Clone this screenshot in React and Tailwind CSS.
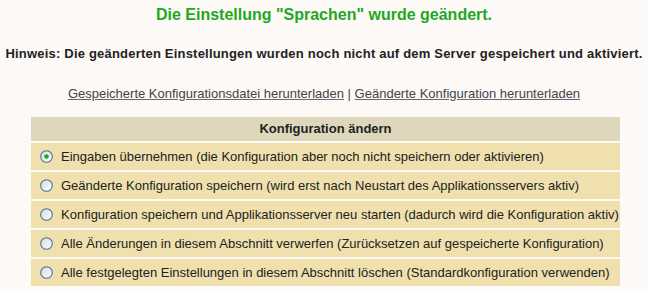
const options = [
  { label: 'Eingaben übernehmen (die Konfiguration aber noch nicht speichern oder aktivieren)', checked: true },
  { label: 'Geänderte Konfiguration speichern (wird erst nach Neustart des Applikationsservers aktiv)' },
  { label: 'Konfiguration speichern und Applikationsserver neu starten (dadurch wird die Konfiguration aktiv)' },
  { label: 'Alle Änderungen in diesem Abschnitt verwerfen (Zurücksetzen auf gespeicherte Konfiguration)' },
  { label: 'Alle festgelegten Einstellungen in diesem Abschnitt löschen (Standardkonfiguration verwenden)' },
];

function Radio({ checked }) {
  return (
    <svg width="13" height="13" viewBox="0 0 13 13" className="shrink-0">
      <defs>
        <linearGradient id="rg" x1="0" y1="0" x2="1" y2="1">
          <stop offset="0" stopColor="#d4d8de" />
          <stop offset="1" stopColor="#ffffff" />
        </linearGradient>
      </defs>
      <circle cx="6.5" cy="6.5" r="5.8" fill="url(#rg)" stroke="#4a7199" strokeWidth="1.1" />
      {checked && <circle cx="6.5" cy="6.5" r="2.3" fill="#24a624" />}
    </svg>
  );
}

export default function App() {
  return (
    <div className="min-h-[291px] bg-[#fcf9f6] text-[#222] font-['Liberation_Sans',Arial,sans-serif]">
      <h1 className="pt-[6px] text-center text-[16px] font-bold leading-[18px] text-[#1fa81f]">
        Die Einstellung "Sprachen" wurde geändert.
      </h1>

      <p className="mt-[22px] text-center text-[13px] font-bold leading-[15px] tracking-[0.2px] text-[#222]">
        Hinweis: Die geänderten Einstellungen wurden noch nicht auf dem Server gespeichert und aktiviert.
      </p>

      <p className="mt-[25px] text-center text-[13px] leading-[15px] text-[#444]">
        <a href="#" className="underline decoration-[#667]">Gespeicherte Konfigurationsdatei herunterladen</a>
        {' | '}
        <a href="#" className="underline decoration-[#667]">Geänderte Konfiguration herunterladen</a>
      </p>

      <div className="ml-[31px] mt-[16px] flex w-[589px] flex-col gap-[2px]">
        <div className="flex h-[24px] items-center justify-center bg-[#ded7bc] text-[13px] font-bold text-[#222]">
          Konfiguration ändern
        </div>
        {options.map((o) => (
          <label key={o.label} className="flex h-[27px] items-center gap-[8px] bg-[#efe0ae] pl-[9px] text-[13px] text-[#222]">
            <Radio checked={o.checked} />
            <span>{o.label}</span>
          </label>
        ))}
      </div>
    </div>
  );
}
